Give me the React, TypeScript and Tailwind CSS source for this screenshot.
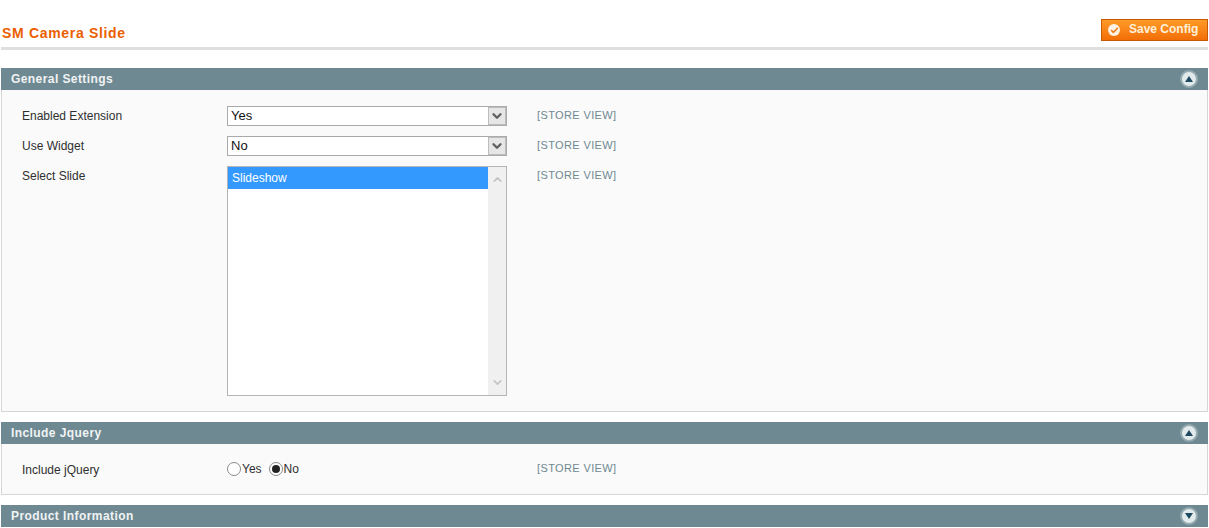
import { ReactNode } from 'react';
import { Check, ChevronDown, ChevronUp } from 'lucide-react';

function SectionHeader({ title, open = true }: { title: string; open?: boolean }) {
  return (
    <div className="h-[22px] bg-[#6f8992] flex items-center justify-between pl-[10px] pr-[10px]">
      <span className="text-[12px] font-bold text-[#f0f3f4] tracking-[0.42px]">{title}</span>
      <span className="w-[18px] h-[18px] rounded-full bg-[#e2eaec] border-[2px] border-[#94a9b0] flex items-center justify-center">
        <svg width="8" height="6" viewBox="0 0 8 6">
          <path d={open ? 'M4 0L8 6H0Z' : 'M4 6L8 0H0Z'} fill="#1f4a5f" />
        </svg>
      </span>
    </div>
  );
}

function Row({ label, children, className = 'h-[20px]', storeClass = 'pt-[1px]' }: { label: string; children: ReactNode; className?: string; storeClass?: string }) {
  return (
    <div className={`flex ${className}`}>
      <div className="w-[205px] text-[12px] leading-[20px] text-[#2f2f2f]">{label}</div>
      <div className="w-[310px]">{children}</div>
      <div className={`text-[11px] leading-[16px] text-[#6f8992] tracking-[0.38px] whitespace-nowrap ${storeClass}`}>[STORE VIEW]</div>
    </div>
  );
}

function SelectBox({ value }: { value: string }) {
  return (
    <div className="w-[280px] h-[20px] border border-[#aaaaaa] bg-white flex items-center justify-between">
      <span className="pl-[3px] text-[13px] text-[#111111]">{value}</span>
      <span className="w-[18px] h-[18px] bg-[#e6e6e6] border border-[#bdbdbd] flex items-center justify-center">
        <ChevronDown size={14} strokeWidth={4} className="text-[#5f5f5f]" />
      </span>
    </div>
  );
}

function Radio({ checked = false }: { checked?: boolean }) {
  return (
    <span className="w-[14px] h-[14px] rounded-full border border-[#8a8a8a] bg-white flex items-center justify-center">
      {checked && <span className="w-[8px] h-[8px] rounded-full bg-[#222222]" />}
    </span>
  );
}

export default function App() {
  return (
    <div className="w-[1209px] h-[528px] overflow-hidden bg-white px-[1px] font-['Liberation_Sans',Arial,sans-serif]">
      <div className="h-[50px] border-b-[3px] border-[#dfdfdf] flex justify-between">
        <h1 className="pt-[24px] pl-[1px] text-[14px] leading-[18px] font-bold text-[#eb5e00] tracking-[0.68px]">SM Camera Slide</h1>
        <div className="mt-[19px] h-[22px] w-[107px] border border-[#c75a00] bg-gradient-to-b from-[#ff9a26] to-[#f26e05] flex items-center pl-[6px]">
          <span className="w-[12px] h-[12px] rounded-full bg-[#fff3e6] flex items-center justify-center">
            <Check size={9} strokeWidth={4} className="text-[#ef7a10]" />
          </span>
          <span className="ml-[9px] -mt-[2px] text-[12px] font-bold text-[#fff0d8] tracking-[0px]">Save Config</span>
        </div>
      </div>

      <div className="mt-[18px]">
        <SectionHeader title="General Settings" />
        <div className="h-[322px] border border-t-0 border-[#d6d6d6] bg-[#fafafa] pt-[16px] pl-[20px] flex flex-col gap-[10px]">
          <Row label="Enabled Extension">
            <SelectBox value="Yes" />
          </Row>
          <Row label="Use Widget">
            <SelectBox value="No" />
          </Row>
          <Row label="Select Slide" className="h-[230px]">
            <div className="w-[280px] h-[230px] border border-[#b5b5b5] bg-white flex">
              <div className="flex-1">
                <div className="h-[22px] bg-[#3399ff] text-white text-[12px] leading-[22px] pl-[4px]">Slideshow</div>
              </div>
              <div className="w-[18px] bg-[#f0f0f0] flex flex-col items-center justify-between py-[6px] text-[#c4c4c4]">
                <ChevronUp size={13} strokeWidth={3} />
                <ChevronDown size={13} strokeWidth={3} />
              </div>
            </div>
          </Row>
        </div>
      </div>

      <div className="mt-[10px]">
        <SectionHeader title="Include Jquery" />
        <div className="h-[51px] border border-t-0 border-[#d6d6d6] bg-[#fafafa] pt-[16px] pl-[20px]">
          <Row label="Include jQuery" storeClass="pt-0">
            <div className="flex items-center h-[20px] -mt-[1px] text-[12px] text-[#2f2f2f]">
              <Radio />
              <span className="ml-[1px]">Yes</span>
              <span className="ml-[7px]">
                <Radio checked />
              </span>
              <span className="ml-[1px]">No</span>
            </div>
          </Row>
        </div>
      </div>

      <div className="mt-[10px]">
        <SectionHeader title="Product Information" open={false} />
      </div>
    </div>
  );
}
